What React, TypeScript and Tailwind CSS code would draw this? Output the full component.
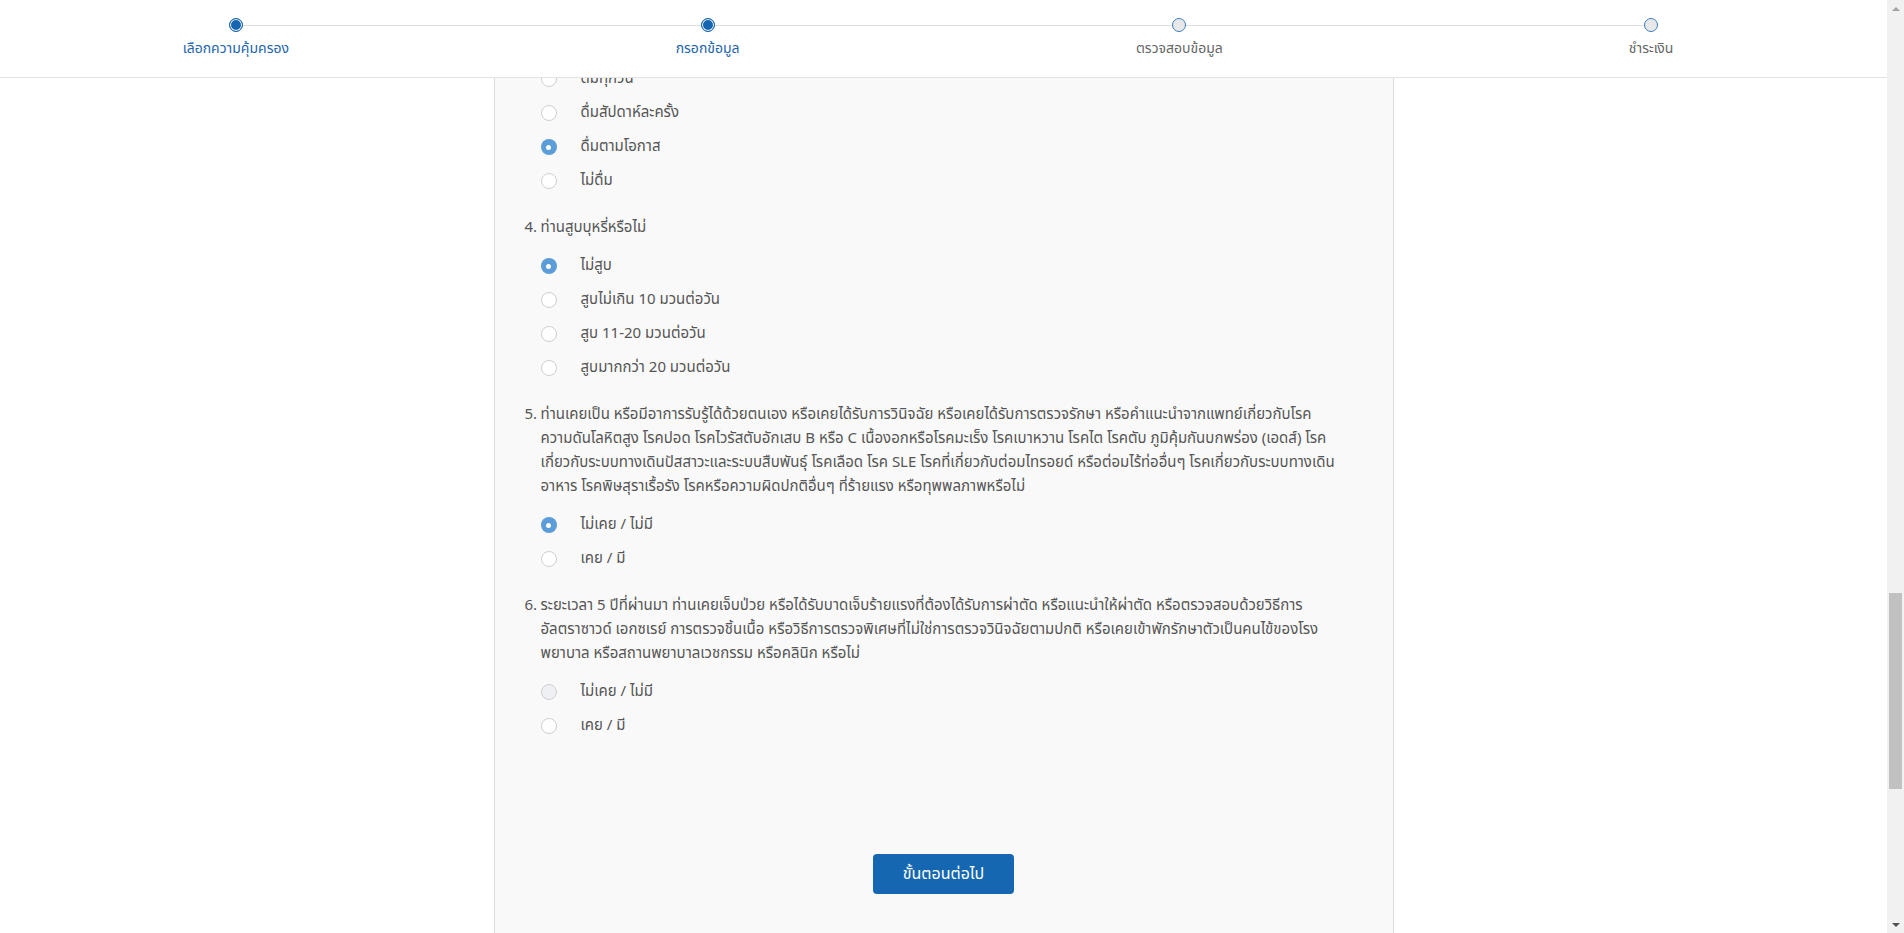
import React, { useLayoutEffect, useRef } from "react";

const steps = [
  { label: "เลือกความคุ้มครอง", active: true },
  { label: "กรอกข้อมูล", active: true },
  { label: "ตรวจสอบข้อมูล", active: false },
  { label: "ชำระเงิน", active: false },
];

const fields = [
  "คำนำหน้าชื่อ",
  "ชื่อ",
  "นามสกุล",
  "เลขประจำตัวประชาชน",
  "วันเดือนปีเกิด",
  "เพศ",
  "สถานภาพ",
  "สัญชาติ",
  "อาชีพ",
  "ตำแหน่งงาน",
  "รายได้ต่อปี",
  "เบอร์โทรศัพท์มือถือ",
  "อีเมล",
  "บ้านเลขที่",
  "หมู่บ้าน / อาคาร",
  "ถนน",
  "จังหวัด",
  "เขต / อำเภอ",
  "แขวง / ตำบล",
  "รหัสไปรษณีย์",
  "ชื่อ-นามสกุล ผู้รับประโยชน์",
  "ความสัมพันธ์กับผู้เอาประกัน",
  "เบอร์โทรศัพท์ผู้รับประโยชน์",
  "ส่วนสูง (เซนติเมตร)",
  "น้ำหนัก (กิโลกรัม)",
];

function Radio({ checked, soft }: { checked?: boolean; soft?: boolean }) {
  if (checked) {
    return (
      <span className="flex h-[16px] w-[16px] shrink-0 items-center justify-center rounded-full bg-[#5b9dd9]">
        <span className="h-[5px] w-[5px] rounded-full bg-white" />
      </span>
    );
  }
  return (
    <span
      className={
        soft
          ? "h-[16px] w-[16px] shrink-0 rounded-full border border-[#cfcfcf] bg-[#eef0f3]"
          : "h-[16px] w-[16px] shrink-0 rounded-full border border-[#cfcfcf] bg-white"
      }
    />
  );
}

function Option({ label, checked, soft }: { label: string; checked?: boolean; soft?: boolean }) {
  return (
    <div className="flex h-[34px] items-center pl-[16px]">
      <Radio checked={checked} soft={soft} />
      <span className="ml-[24px] text-[15px] leading-[24px] text-[#555]">{label}</span>
    </div>
  );
}

function Question({
  num,
  lines,
  options,
  checked,
  soft,
  titleRef,
}: {
  num: string;
  lines: string[];
  options: string[];
  checked: number;
  soft?: number;
  titleRef?: React.Ref<HTMLDivElement>;
}) {
  return (
    <div className="mb-[18px]">
      <div ref={titleRef} className="mb-[9px] flex text-[15px] leading-[24px] text-[#555]">
        <span className="w-[16px] shrink-0">{num}.</span>
        <div>
          {lines.map((l) => (
            <div key={l} className="whitespace-nowrap">
              {l}
            </div>
          ))}
        </div>
      </div>
      {options.map((o, i) => (
        <Option key={o} label={o} checked={i === checked} soft={i === soft} />
      ))}
    </div>
  );
}

function Scrollbar() {
  return (
    <div className="flex h-screen w-[17px] shrink-0 flex-col items-center bg-[#f1f1f1]">
      <div className="flex h-[17px] w-full items-center justify-center">
        <span className="h-0 w-0 border-x-[4px] border-b-[4px] border-x-transparent border-b-[#a3a3a3]" />
      </div>
      <div className="flex-1 w-full px-[2px]">
        <div className="mt-[576px] h-[196px] w-full bg-[#c1c1c1]" />
      </div>
      <div className="flex h-[17px] w-full items-center justify-center">
        <span className="h-0 w-0 border-x-[4px] border-t-[4px] border-x-transparent border-t-[#505050]" />
      </div>
    </div>
  );
}

export default function App() {
  const scrollRef = useRef<HTMLDivElement>(null);
  const q4Ref = useRef<HTMLDivElement>(null);

  useLayoutEffect(() => {
    const s = scrollRef.current;
    const q = q4Ref.current;
    if (!s || !q) return;
    const top = q.getBoundingClientRect().top;
    s.scrollTop += top - 216;
  }, []);

  return (
    <div className="flex h-screen w-full overflow-hidden bg-white font-['Noto_Sans_Thai','Noto_Sans',sans-serif]">
      <div
        ref={scrollRef}
        className="h-screen min-w-0 flex-1 overflow-y-scroll [scrollbar-width:none]"
      >
        <header className="sticky top-0 z-10 h-[78px] border-b border-[#e3e3e3] bg-white">
          <div className="relative grid h-full grid-cols-4">
            <div className="absolute left-[12.5%] right-[12.5%] top-[25px] h-px bg-[#dddddd]" />
            {steps.map((s) => (
              <div key={s.label} className="relative flex flex-col items-center pt-[18px]">
                {s.active ? (
                  <span className="h-[14px] w-[14px] rounded-full border border-[#1565b0] bg-[#1565b0] shadow-[inset_0_0_0_1px_#ffffff]" />
                ) : (
                  <span className="h-[14px] w-[14px] rounded-full border border-[#3d7fc4] bg-[#e8e8e8]" />
                )}
                <span
                  className={
                    s.active
                      ? "mt-[7px] text-[14px] leading-[20px] text-[#1e64ad]"
                      : "mt-[7px] text-[14px] leading-[20px] text-[#666]"
                  }
                >
                  {s.label}
                </span>
              </div>
            ))}
          </div>
        </header>

        <main className="mx-auto w-[900px] border-x border-[#dddddd] bg-[#f9f9f9] px-[30px] pb-[150px] pt-[21px]">
          {fields.map((f) => (
            <div key={f} className="mb-[24px] flex flex-col gap-[6px]">
              <label className="text-[15px] leading-[24px] text-[#555]">{f}</label>
              <div className="h-[40px] rounded-[4px] border border-[#d6d6d6] bg-white" />
            </div>
          ))}
          <h2 className="mb-[20px] mt-[30px] text-[20px] leading-[30px] text-[#1e64ad]">คำถามสุขภาพ</h2>
          <Question
            num="1"
            lines={["ในระยะเวลา 6 เดือนที่ผ่านมา น้ำหนักของท่านเปลี่ยนแปลงเกิน 5 กิโลกรัมหรือไม่"]}
            options={["ไม่เคย / ไม่มี", "เคย / มี"]}
            checked={0}
          />
          <Question
            num="2"
            lines={["ท่านเคยถูกปฏิเสธการขอเอาประกันภัย หรือถูกเรียกเก็บเบี้ยประกันภัยเพิ่มหรือไม่"]}
            options={["ไม่เคย / ไม่มี", "เคย / มี"]}
            checked={0}
          />
          <Question
            num="3"
            lines={["ท่านดื่มเครื่องดื่มที่มีแอลกอฮอล์หรือไม่"]}
            options={["ดื่มทุกวัน", "ดื่มสัปดาห์ละครั้ง", "ดื่มตามโอกาส", "ไม่ดื่ม"]}
            checked={2}
          />
          <Question
            num="4"
            titleRef={q4Ref}
            lines={["ท่านสูบบุหรี่หรือไม่"]}
            options={["ไม่สูบ", "สูบไม่เกิน 10 มวนต่อวัน", "สูบ 11-20 มวนต่อวัน", "สูบมากกว่า 20 มวนต่อวัน"]}
            checked={0}
          />
          <Question
            num="5"
            lines={[
              "ท่านเคยเป็น หรือมีอาการรับรู้ได้ด้วยตนเอง หรือเคยได้รับการวินิจฉัย หรือเคยได้รับการตรวจรักษา หรือคำแนะนำจากแพทย์เกี่ยวกับโรค",
              "ความดันโลหิตสูง โรคปอด โรคไวรัสตับอักเสบ B หรือ C เนื้องอกหรือโรคมะเร็ง โรคเบาหวาน โรคไต โรคตับ ภูมิคุ้มกันบกพร่อง (เอดส์) โรค",
              "เกี่ยวกับระบบทางเดินปัสสาวะและระบบสืบพันธุ์ โรคเลือด โรค SLE โรคที่เกี่ยวกับต่อมไทรอยด์ หรือต่อมไร้ท่ออื่นๆ โรคเกี่ยวกับระบบทางเดิน",
              "อาหาร โรคพิษสุราเรื้อรัง โรคหรือความผิดปกติอื่นๆ ที่ร้ายแรง หรือทุพพลภาพหรือไม่",
            ]}
            options={["ไม่เคย / ไม่มี", "เคย / มี"]}
            checked={0}
          />
          <Question
            num="6"
            lines={[
              "ระยะเวลา 5 ปีที่ผ่านมา ท่านเคยเจ็บป่วย หรือได้รับบาดเจ็บร้ายแรงที่ต้องได้รับการผ่าตัด หรือแนะนำให้ผ่าตัด หรือตรวจสอบด้วยวิธีการ",
              "อัลตราซาวด์ เอกซเรย์ การตรวจชิ้นเนื้อ หรือวิธีการตรวจพิเศษที่ไม่ใช่การตรวจวินิจฉัยตามปกติ หรือเคยเข้าพักรักษาตัวเป็นคนไข้ของโรง",
              "พยาบาล หรือสถานพยาบาลเวชกรรม หรือคลินิก หรือไม่",
            ]}
            options={["ไม่เคย / ไม่มี", "เคย / มี"]}
            checked={-1}
            soft={0}
          />
          <div className="flex justify-center pt-[93px]">
            <button className="h-[40px] w-[141px] rounded-[4px] bg-[#1467b0] text-[16px] text-white">
              ขั้นตอนต่อไป
            </button>
          </div>
        </main>
        <footer className="h-[480px] border-t border-[#e3e3e3] bg-white" />
      </div>
      <Scrollbar />
    </div>
  );
}
